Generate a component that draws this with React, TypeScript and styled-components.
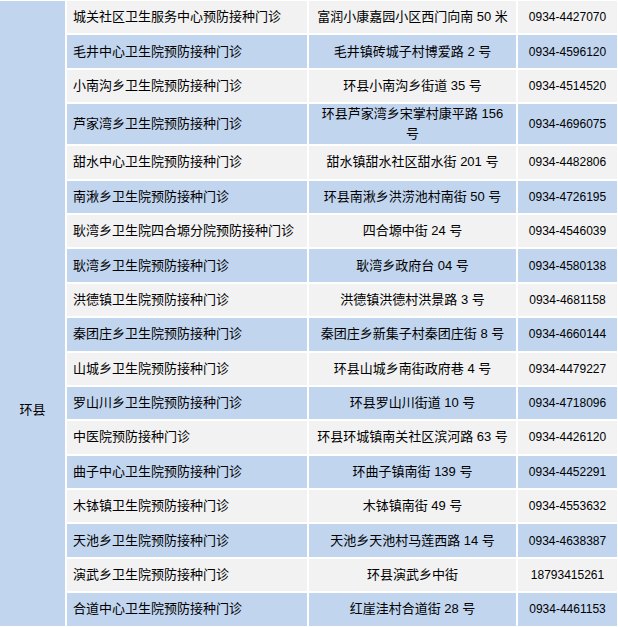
import React from "react"
import styled, { createGlobalStyle } from "styled-components"

const GlobalStyle = createGlobalStyle`
  html, body {
    margin: 0;
    padding: 0;
    background: #ffffff;
    overflow: hidden;
  }
`

const Table = styled.table`
  border-collapse: separate;
  border-spacing: 2px;
  margin: -1px 0 0 -2px;
  table-layout: fixed;
  width: 621px;
  font-family: "Liberation Sans", "Noto Sans CJK SC", sans-serif;
  font-size: 13px;
  line-height: 20px;
  color: #000000;
`

const Col = styled.col<{ $w: number }>`
  width: ${(p) => p.$w}px;
`

const Row = styled.tr<{ $tall?: boolean }>`
  height: ${(p) => (p.$tall ? "40px" : "32.4px")};
`

const Cell = styled.td<{ $blue?: boolean }>`
  background: ${(p) => (p.$blue ? "#c1d5ef" : "#f2f2f2")};
  padding: 0 6px;
  vertical-align: middle;
`

const CountyCell = styled.td`
  background: #c1d5ef;
  text-align: center;
  vertical-align: top;
  padding: 399px 0 0;
`

const NameCell = styled(Cell)`
  text-align: left;
`

const AddressCell = styled(Cell)`
  text-align: center;
`

const PhoneCell = styled(Cell)`
  text-align: center;
  font-size: 12px;
  padding: 0;
`

type Clinic = {
  name: string
  address: string
  phone: string
}

const clinics: Clinic[] = [
  { name: "城关社区卫生服务中心预防接种门诊", address: "富润小康嘉园小区西门向南 50 米", phone: "0934-4427070" },
  { name: "毛井中心卫生院预防接种门诊", address: "毛井镇砖城子村博爱路 2 号", phone: "0934-4596120" },
  { name: "小南沟乡卫生院预防接种门诊", address: "环县小南沟乡街道 35 号", phone: "0934-4514520" },
  { name: "芦家湾乡卫生院预防接种门诊", address: "环县芦家湾乡宋掌村康平路 156 号", phone: "0934-4696075" },
  { name: "甜水中心卫生院预防接种门诊", address: "甜水镇甜水社区甜水街 201 号", phone: "0934-4482806" },
  { name: "南湫乡卫生院预防接种门诊", address: "环县南湫乡洪涝池村南街 50 号", phone: "0934-4726195" },
  { name: "耿湾乡卫生院四合塬分院预防接种门诊", address: "四合塬中街 24 号", phone: "0934-4546039" },
  { name: "耿湾乡卫生院预防接种门诊", address: "耿湾乡政府台 04 号", phone: "0934-4580138" },
  { name: "洪德镇卫生院预防接种门诊", address: "洪德镇洪德村洪景路 3 号", phone: "0934-4681158" },
  { name: "秦团庄乡卫生院预防接种门诊", address: "秦团庄乡新集子村秦团庄街 8 号", phone: "0934-4660144" },
  { name: "山城乡卫生院预防接种门诊", address: "环县山城乡南街政府巷 4 号", phone: "0934-4479227" },
  { name: "罗山川乡卫生院预防接种门诊", address: "环县罗山川街道 10 号", phone: "0934-4718096" },
  { name: "中医院预防接种门诊", address: "环县环城镇南关社区滨河路 63 号", phone: "0934-4426120" },
  { name: "曲子中心卫生院预防接种门诊", address: "环曲子镇南街 139 号", phone: "0934-4452291" },
  { name: "木钵镇卫生院预防接种门诊", address: "木钵镇南街 49 号", phone: "0934-4553632" },
  { name: "天池乡卫生院预防接种门诊", address: "天池乡天池村马莲西路 14 号", phone: "0934-4638387" },
  { name: "演武乡卫生院预防接种门诊", address: "环县演武乡中街", phone: "18793415261" },
  { name: "合道中心卫生院预防接种门诊", address: "红崖洼村合道街 28 号", phone: "0934-4461153" },
]

function App(): JSX.Element {
  return (
    <>
      <GlobalStyle />
      <Table>
        <colgroup>
          <Col $w={65} />
          <Col $w={240} />
          <Col $w={207} />
          <Col $w={99} />
        </colgroup>
        <tbody>
          {clinics.map((c, i) => {
            const blue = i % 2 === 1
            return (
              <Row key={c.name} $tall={i === 3}>
                {i === 0 && <CountyCell rowSpan={clinics.length}>环县</CountyCell>}
                <NameCell $blue={blue}>{c.name}</NameCell>
                <AddressCell $blue={blue}>{c.address}</AddressCell>
                <PhoneCell $blue={blue}>{c.phone}</PhoneCell>
              </Row>
            )
          })}
        </tbody>
      </Table>
    </>
  )
}

export default App
